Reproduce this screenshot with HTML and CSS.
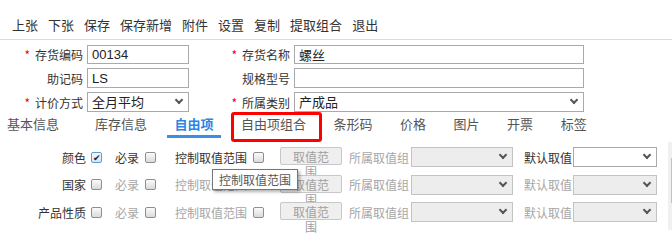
FILE: index.html
```html
<!DOCTYPE html>
<html lang="zh-CN">
<head>
    <meta charset="UTF-8">
    <meta name="viewport" content="width=device-width, initial-scale=1.0">
    <title>存货档案</title>
    <link rel="stylesheet" href="styles.css">
</head>
<body>

<div class="toolbar">
    <span>上张</span>
    <span>下张</span>
    <span>保存</span>
    <span>保存新增</span>
    <span>附件</span>
    <span>设置</span>
    <span>复制</span>
    <span>提取组合</span>
    <span>退出</span>
</div>

<div class="form">
    <label class="lbl"><span class="req">*</span>存货编码</label>
    <input class="txt" value="00134">
    <label class="lbl"><span class="req">*</span>存货名称</label>
    <input class="txt" value="螺丝">

    <label class="lbl">助记码</label>
    <input class="txt" value="LS">
    <label class="lbl">规格型号</label>
    <input class="txt" value="">

    <label class="lbl"><span class="req">*</span>计价方式</label>
    <span class="sel"><select><option>全月平均</option></select></span>
    <label class="lbl"><span class="req">*</span>所属类别</label>
    <span class="sel"><select><option>产成品</option></select></span>
</div>

<div class="tabs">
    <span class="tab">基本信息</span>
    <span class="tab">库存信息</span>
    <span class="tab active">自由项</span>
    <span class="tab marked">自由项组合</span>
    <span class="tab">条形码</span>
    <span class="tab">价格</span>
    <span class="tab">图片</span>
    <span class="tab">开票</span>
    <span class="tab">标签</span>
</div>

<div class="panel">
    <div class="items">
        <div class="row">
            <span class="name">颜色</span><span class="cb on">✔</span>
            <span class="opt must">必录</span><span class="cb"></span>
            <span class="opt ctl">控制取值范围</span><span class="cb"></span>
            <span class="range-btn">取值范围</span>
            <span class="opt grp off">所属取值组</span>
            <span class="sel sel-grp"><select disabled><option></option></select></span>
            <span class="opt def">默认取值</span>
            <span class="sel sel-def"><select><option></option></select></span>
        </div>
        <div class="row">
            <span class="name">国家</span><span class="cb"></span>
            <span class="opt must off">必录</span><span class="cb"></span>
            <span class="opt ctl off">控制取值范围</span><span class="cb"></span>
            <span class="range-btn">取值范围</span>
            <span class="opt grp off">所属取值组</span>
            <span class="sel sel-grp"><select disabled><option></option></select></span>
            <span class="opt def off">默认取值</span>
            <span class="sel sel-def"><select disabled><option></option></select></span>
        </div>
        <div class="row">
            <span class="name">产品性质</span><span class="cb"></span>
            <span class="opt must off">必录</span><span class="cb"></span>
            <span class="opt ctl off">控制取值范围</span><span class="cb"></span>
            <span class="range-btn">取值范围</span>
            <span class="opt grp off">所属取值组</span>
            <span class="sel sel-grp"><select disabled><option></option></select></span>
            <span class="opt def off">默认取值</span>
            <span class="sel sel-def"><select disabled><option></option></select></span>
        </div>
        <div class="tip">控制取值范围</div>
    </div>
    <div class="scroll"><div class="thumb"></div></div>
</div>

</body>
</html>
```

FILE: styles.css
```css
/* базовая разметка */
* {
    box-sizing: border-box;
}
html, body {
    margin: 0;
    overflow: hidden;
}
body {
    font-family: "Noto Sans CJK SC", "Liberation Sans", sans-serif;
    font-size: 12px;
    color: #333;
    background: #fff;
    width: 672px;
    height: 252px;
}

/* панель кнопок */
.toolbar {
    display: flex;
    gap: 10px;
    height: 40px;
    padding: 16px 0 0 12px;
    border-bottom: 1px solid #dcdcdc;
    font-size: 13px;
    line-height: 18px;
}

/* шапка карточки */
.form {
    display: grid;
    grid-template-columns: 83px 102px 97px 290px;
    grid-template-rows: 19px 20px 20px;
    gap: 4px;
    padding-top: 5px;
    align-items: center;
}
.lbl {
    text-align: right;
    white-space: nowrap;
}
.req {
    color: #f00;
    margin-right: 5px;
}
.txt,
.sel select {
    width: 100%;
    height: 100%;
    margin: 0;
    padding: 0 4px;
    border: 1px solid #aaa;
    background: #fff;
    color: #222;
    font: 13px "Liberation Sans", "Noto Sans CJK SC", sans-serif;
    outline: none;
}
.sel {
    position: relative;
    display: block;
    height: 100%;
}
.sel select {
    appearance: none;
    -webkit-appearance: none;
    border-radius: 0;
}
.sel select:disabled {
    background: #e6e6e6;
}
.sel::after {
    content: "";
    position: absolute;
    right: 7px;
    top: 50%;
    width: 4px;
    height: 4px;
    margin-top: -5px;
    border-right: 2px solid #555;
    border-bottom: 2px solid #555;
    transform: rotate(45deg);
}

/* вкладки */
.tabs {
    display: flex;
    height: 26px;
    font-size: 13px;
    line-height: 23px;
    color: #555;
}
.tab {
    position: relative;
    padding: 0 13.75px;
    white-space: nowrap;
}
.tab:first-child {
    padding-left: 7px;
    padding-right: 22.25px;
}
.tab.active {
    color: #2b85e4;
    font-weight: bold;
}
.tab.active::after {
    content: "";
    position: absolute;
    left: 6.5px;
    right: 6.5px;
    bottom: 0;
    height: 3px;
    background: #3b8de6;
}
.tab.marked::before {
    content: "";
    position: absolute;
    left: 4px;
    right: -2px;
    top: 0;
    bottom: -4px;
    border: 3px solid #f00;
    border-radius: 3px;
}

/* свободные признаки */
.panel {
    display: flex;
    margin-top: 4px;
}
.items {
    position: relative;
    flex: none;
    width: 668px;
    padding-top: 5px;
    display: flex;
    flex-direction: column;
    gap: 7.5px;
}
.row {
    display: flex;
    align-items: center;
    height: 20px;
    white-space: nowrap;
}
.name {
    flex: none;
    width: 86px;
    text-align: right;
}
.off {
    color: #a6a6a6;
}
.cb {
    flex: none;
    width: 11px;
    height: 11px;
    margin-left: 6px;
    border: 1px solid #8e8e8e;
    border-radius: 2px;
    background: linear-gradient(#fbfbfb, #dadada);
    font-size: 9px;
    line-height: 9px;
    text-align: center;
    color: #222;
}
.name + .cb {
    margin-left: 5px;
}
.cb.on {
    border-color: #5b9bd5;
    background: linear-gradient(#f4f9ff, #d6e6f7);
}
.must {
    margin-left: 13px;
}
.ctl {
    margin-left: 19px;
}
.range-btn {
    flex: none;
    align-self: flex-start;
    width: 62px;
    height: 18px;
    margin-left: 16px;
    padding: 1px 10px 0;
    border: 1px solid #c8c8c8;
    border-radius: 2px;
    background: #efefef;
    color: #a0a0a0;
    text-align: center;
    line-height: 15px;
    white-space: normal;
}
.grp {
    margin-left: 7px;
}
.sel-grp {
    flex: none;
    width: 102px;
    margin-left: 2px;
}
.def {
    margin-left: 11px;
}
.sel-def {
    flex: none;
    width: 84px;
    margin-left: 1px;
}
.tip {
    position: absolute;
    left: 212px;
    top: 27px;
    height: 21px;
    padding: 0 6px;
    border: 1px solid #767676;
    background: #fff;
    color: #575757;
    line-height: 19px;
    box-shadow: 2px 2px 3px rgba(0, 0, 0, 0.3);
}
.scroll {
    flex: none;
    width: 17px;
    height: 88px;
    background: #f0f0f0;
}
.thumb {
    width: 12px;
    height: 45px;
    margin: 16px 0 0 3px;
    background: #c1c1c1;
}
```
